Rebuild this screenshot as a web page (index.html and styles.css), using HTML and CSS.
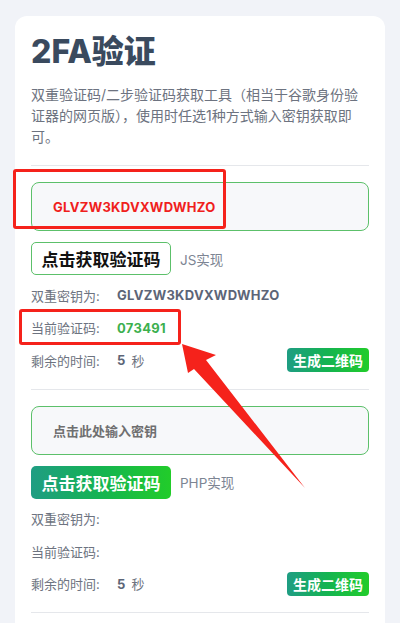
FILE: index.html
```html
<!DOCTYPE html>
<html lang="zh">
<head>
<meta charset="utf-8">
<link rel="stylesheet" href="styles.css">
</head>
<body>
<div class="card">
  <h1 class="title">2FA验证</h1>
  <p class="desc">双重验证码/二步验证码获取工具（相当于谷歌身份验证器的网页版），使用时任选1种方式输入密钥获取即可。</p>

  <section class="block">
    <div class="input filled">GLVZW3KDVXWDWHZO</div>
    <div class="action">
      <button class="btn outline">点击获取验证码</button>
      <span class="impl">JS实现</span>
    </div>
    <div class="row"><span class="label">双重密钥为:</span><span class="value">GLVZW3KDVXWDWHZO</span></div>
    <div class="row"><span class="label">当前验证码:</span><span class="value code">073491</span></div>
    <div class="row"><span class="label">剩余的时间:</span><span class="value">5</span><span class="unit">秒</span><button class="qr">生成二维码</button></div>
  </section>

  <section class="block">
    <div class="input placeholder">点击此处输入密钥</div>
    <div class="action">
      <button class="btn solid">点击获取验证码</button>
      <span class="impl">PHP实现</span>
    </div>
    <div class="row"><span class="label">双重密钥为:</span></div>
    <div class="row"><span class="label">当前验证码:</span></div>
    <div class="row"><span class="label">剩余的时间:</span><span class="value">5</span><span class="unit">秒</span><button class="qr">生成二维码</button></div>
  </section>
</div>

<div class="mark mark1"></div>
<div class="mark mark2"></div>
<svg class="arrow" width="400" height="623" viewBox="0 0 400 623">
  <polygon points="182,344 216,355 206,360 305,488 194,369 188,373" fill="#f5221b"/>
</svg>
</body>
</html>
```
FILE: styles.css
```css
* { box-sizing: border-box; }
html, body { margin: 0; padding: 0; }
body {
  background: #f1f3f8;
  font-family: Inter, "Noto Sans CJK SC", sans-serif;
  width: 400px;
  height: 623px;
  overflow: hidden;
  position: relative;
}
.card {
  background: #fff;
  margin: 16px 15px 0;
  border-radius: 12px 12px 0 0;
  padding: 16px 16px 10px;
}
.title {
  margin: 0;
  font-size: 32px;
  line-height: 40px;
  font-weight: 800;
  color: #3a4a5e;
}
.desc {
  margin: 12px 0 0;
  font-size: 14px;
  line-height: 21px;
  color: #6d7380;
  padding-bottom: 18px;
  border-bottom: 1px solid #e5e7eb;
}
.block {
  padding: 16px 0 12px;
  border-bottom: 1px solid #e5e7eb;
}
.input {
  height: 49px;
  border: 1px solid #5cc06a;
  border-radius: 8px;
  background: #f7f8fa;
  padding: 0 21px;
  display: flex;
  align-items: center;
  font-size: 13px;
  font-weight: 700;
}
.input.filled { color: #f0201c; letter-spacing: 0.3px; }
.input.placeholder { color: #6f6f70; }
.action {
  display: flex;
  align-items: center;
  margin-top: 11px;
  gap: 9px;
}
.btn {
  width: 140px;
  height: 33px;
  border-radius: 5px;
  font-family: inherit;
  font-size: 17px;
  font-weight: 700;
  padding: 0;
  cursor: pointer;
}
.btn.outline {
  background: #fff;
  border: 1px solid #5cc06a;
  color: #111;
}
.btn.solid {
  border: none;
  color: #fff;
  background: linear-gradient(90deg, #1f9d83 0%, #14b450 50%, #22cc2a 100%);
}
.impl {
  font-size: 13.5px;
  color: #7d8593;
}
.row {
  display: flex;
  align-items: center;
  height: 32.5px;
  font-size: 13px;
  color: #6d7380;
}
.action + .row { margin-top: 4px; }
.label { width: 86px; }
.value {
  font-weight: 700;
  color: #5c6577;
  letter-spacing: 0.3px;
}
.value.code { color: #3db04e; }
.unit { margin-left: 6px; }
.qr {
  margin-left: auto;
  width: 82px;
  height: 24px;
  border: none;
  border-radius: 4px;
  background: linear-gradient(90deg, #1f9d83 0%, #14b450 50%, #22cc2a 100%);
  color: #fff;
  font-family: inherit;
  font-size: 14px;
  font-weight: 700;
  padding: 0;
}
.mark {
  position: absolute;
  border: 3px solid #f5221b;
  border-radius: 3px;
}
.mark1 { left: 13px; top: 169px; width: 213px; height: 60px; }
.mark2 { left: 19px; top: 309px; width: 162px; height: 36px; }
.arrow { position: absolute; left: 0; top: 0; pointer-events: none; }
```
